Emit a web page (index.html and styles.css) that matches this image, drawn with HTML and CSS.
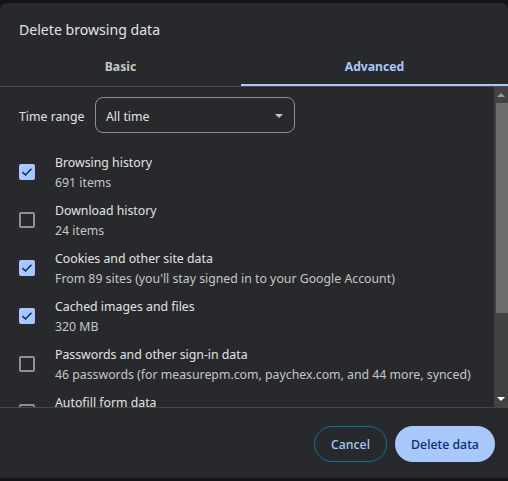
FILE: index.html
```html
<!DOCTYPE html>
<html>
<head>
<meta charset="utf-8">
<link rel="stylesheet" href="styles.css">
</head>
<body>
<div class="dialog">
  <div class="title">Delete browsing data</div>
  <div class="tabs">
    <div class="tab">Basic</div>
    <div class="tab active">Advanced</div>
  </div>
  <div class="divider"></div>
  <div class="body">
    <div class="scroll">
      <div class="range">
        <span class="range-label">Time range</span>
        <div class="select">
          <span>All time</span>
          <svg class="caret" width="8" height="4" viewBox="0 0 8 4"><path d="M0 0 L8 0 L4 4 Z" fill="#c4c7c5"/></svg>
        </div>
      </div>
      <div class="item">
        <div class="cb checked"><svg width="12" height="10" viewBox="0 0 12 10"><path d="M1.5 5.2 L4.5 8 L10.5 1.8" fill="none" stroke="#062e6f" stroke-width="1.6"/></svg></div>
        <div class="texts"><div class="t">Browsing history</div><div class="s">691 items</div></div>
      </div>
      <div class="item">
        <div class="cb"></div>
        <div class="texts"><div class="t">Download history</div><div class="s">24 items</div></div>
      </div>
      <div class="item">
        <div class="cb checked"><svg width="12" height="10" viewBox="0 0 12 10"><path d="M1.5 5.2 L4.5 8 L10.5 1.8" fill="none" stroke="#062e6f" stroke-width="1.6"/></svg></div>
        <div class="texts"><div class="t">Cookies and other site data</div><div class="s">From 89 sites (you'll stay signed in to your Google Account)</div></div>
      </div>
      <div class="item">
        <div class="cb checked"><svg width="12" height="10" viewBox="0 0 12 10"><path d="M1.5 5.2 L4.5 8 L10.5 1.8" fill="none" stroke="#062e6f" stroke-width="1.6"/></svg></div>
        <div class="texts"><div class="t">Cached images and files</div><div class="s">320 MB</div></div>
      </div>
      <div class="item">
        <div class="cb"></div>
        <div class="texts"><div class="t">Passwords and other sign-in data</div><div class="s">46 passwords (for measurepm.com, paychex.com, and 44 more, synced)</div></div>
      </div>
      <div class="item">
        <div class="cb"></div>
        <div class="texts"><div class="t">Autofill form data</div><div class="s">&nbsp;</div></div>
      </div>
    </div>
    <div class="scrollbar">
      <div class="arrow up"><svg width="8" height="4" viewBox="0 0 8 4"><path d="M0 4 L8 4 L4 0 Z" fill="#9a9a9a"/></svg></div>
      <div class="thumb"></div>
      <div class="track-rest"></div>
      <div class="arrow down"><svg width="8" height="4" viewBox="0 0 8 4"><path d="M0 0 L8 0 L4 4 Z" fill="#ffffff"/></svg></div>
    </div>
  </div>
  <div class="divider"></div>
  <div class="footer">
    <button class="btn cancel">Cancel</button>
    <button class="btn primary">Delete data</button>
  </div>
</div>
</body>
</html>
```
FILE: styles.css
```css
html, body {
  margin: 0;
  padding: 0;
  background: #131417;
  height: 481px;
  overflow: hidden;
}
body {
  padding-top: 3px;
  font-family: "Noto Sans", "Open Sans", sans-serif;
  color: #e3e3e3;
}
.dialog {
  background: #28292d;
  border-radius: 6px 6px 0 0;
  height: 475px;
  display: flex;
  flex-direction: column;
}
.title {
  font-size: 14.1px;
  line-height: 20px;
  padding: 17px 0 0 19px;
  height: 28px;
  color: #e3e3e3;
}
.tabs {
  display: flex;
  height: 38px;
}
.tab {
  flex: 0 0 241px;
  box-sizing: border-box;
  display: flex;
  align-items: center;
  justify-content: center;
  font-size: 12.2px;
  font-weight: 700;
  color: #c4c7c5;
  padding-top: 1px;
  border-bottom: 2px solid transparent;
}
.tab.active {
  flex: 1 1 auto;
  color: #a8c7fa;
  border-bottom-color: #a8c7fa;
}
.divider {
  height: 1px;
  background: #47484c;
}
.body {
  height: 320px;
  display: flex;
  overflow: hidden;
}
.scroll {
  flex: 1 1 auto;
  padding: 10px 0 0 19px;
  overflow: hidden;
}
.range {
  display: flex;
  align-items: center;
}
.range-label {
  font-size: 12.3px;
  width: 76px;
  padding-top: 2px;
  color: #e3e3e3;
}
.select {
  box-sizing: border-box;
  width: 200px;
  height: 36px;
  border: 1px solid #8e918f;
  border-radius: 8px;
  display: flex;
  align-items: center;
  justify-content: space-between;
  padding: 2px 11px 0 10px;
  font-size: 12.3px;
  color: #e3e3e3;
}
.item {
  display: flex;
  align-items: center;
  height: 40px;
  margin-top: 8px;
}
.range + .item {
  margin-top: 19px;
}
.cb {
  box-sizing: border-box;
  width: 16px;
  height: 16px;
  border: 2px solid #8e918f;
  border-radius: 2px;
  margin-right: 20px;
  display: flex;
  align-items: center;
  justify-content: center;
}
.cb.checked {
  background: #a8c7fa;
  border-color: #a8c7fa;
}
.texts {
  font-size: 12.3px;
  line-height: 20px;
  padding-top: 2px;
}
.t { color: #e3e3e3; white-space: nowrap; }
.s { color: #c4c7c5; white-space: nowrap; }
.scrollbar {
  flex: 0 0 14px;
  background: #424242;
  display: flex;
  flex-direction: column;
}
.arrow {
  height: 16px;
  display: flex;
  align-items: center;
  justify-content: center;
}
.thumb {
  height: 210px;
  margin-left: 2px;
  background: #6b6b6b;
}
.track-rest {
  flex: 1 1 auto;
}
.footer {
  flex: 1 1 auto;
  display: flex;
  justify-content: flex-end;
  align-items: flex-start;
  gap: 8px;
  padding: 18px 13px 0 0;
}
.btn {
  font-family: inherit;
  font-size: 12.3px;
  font-weight: 500;
  height: 36px;
  border-radius: 18px;
  padding: 0;
  cursor: pointer;
}
.cancel {
  width: 73px;
  background: transparent;
  border: 1px solid #0b6f97;
  color: #a8c7fa;
}
.primary {
  width: 100px;
  background: #a8c7fa;
  border: none;
  color: #062e6f;
}
```
